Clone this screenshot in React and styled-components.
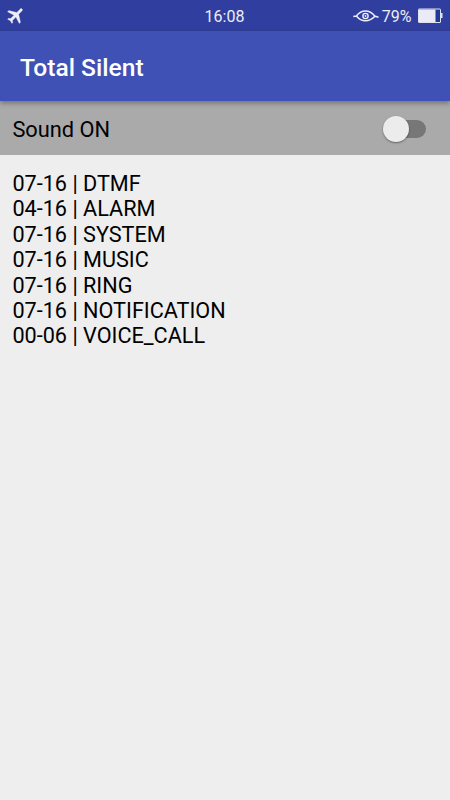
import styled, { createGlobalStyle } from "styled-components";

const GlobalStyle = createGlobalStyle`
  * {
    box-sizing: border-box;
  }
  body {
    margin: 0;
    background: #eeeeee;
    font-family: Roboto, "Liberation Sans", sans-serif;
  }
`;

const Screen = styled.div`
  width: 450px;
  height: 800px;
  overflow: hidden;
  background: #eeeeee;
`;

const StatusBar = styled.div`
  display: grid;
  grid-template-columns: 1fr auto 1fr;
  align-items: center;
  height: 31px;
  padding: 0 7px 0 5px;
  background: #303f9f;
  color: #eceef8;
`;

const Time = styled.span`
  padding: 2px 0 0 1px;
  font-size: 16px;
  line-height: 29px;
`;

const StatusRight = styled.div`
  display: flex;
  align-items: center;
  justify-content: flex-end;
`;

const Percent = styled.span`
  margin: 0 6.6px 0 3px;
  padding-top: 2px;
  font-size: 16px;
  line-height: 29px;
`;

const Icon = styled.svg`
  display: block;
`;

const AppBar = styled.header`
  position: relative;
  display: flex;
  align-items: center;
  height: 70px;
  padding: 3px 20px 0;
  background: #3f51b5;
  box-shadow: 0 2px 5px rgba(0, 0, 0, 0.35);
`;

const Title = styled.h1`
  margin: 0;
  color: #fff;
  font-size: 24.6px;
  font-weight: 500;
  line-height: 30px;
`;

const SoundRow = styled.div`
  display: flex;
  align-items: center;
  justify-content: space-between;
  height: 54px;
  padding: 2px 24px 0 12.4px;
  background: #aaaaaa;
`;

const SoundLabel = styled.span`
  padding-top: 1px;
  color: #000;
  font-size: 21.8px;
  line-height: 26px;
`;

const Track = styled.div`
  display: flex;
  align-items: center;
  justify-content: ${(props) => (props.$on ? "flex-end" : "flex-start")};
  width: 43px;
  height: 18px;
  border-radius: 9px;
  background: linear-gradient(to right, transparent 12px, #777777 12px);
`;

const Thumb = styled.div`
  width: 26px;
  height: 26px;
  border-radius: 50%;
  background: #ececec;
  box-shadow: 0 1px 2px rgba(0, 0, 0, 0.4);
`;

const List = styled.ul`
  margin: 0;
  padding: 16px 12.4px;
  list-style: none;
`;

const Line = styled.li`
  color: #000;
  font-size: 21.65px;
  line-height: 25.4px;
`;

const streams = [
  "07-16 | DTMF",
  "04-16 | ALARM",
  "07-16 | SYSTEM",
  "07-16 | MUSIC",
  "07-16 | RING",
  "07-16 | NOTIFICATION",
  "00-06 | VOICE_CALL",
];

function Plane() {
  return (
    <Icon width="21" height="21" viewBox="0 0 24 24" fill="currentColor">
      <path
        transform="translate(.8 0) rotate(45 12 12)"
        stroke="currentColor"
        strokeWidth=".3"
        d="M21 16v-2l-8-5V3.5c0-.83-.67-1.5-1.5-1.5S10 2.67 10 3.5V9l-8 5v2l8-2.5V19l-2 1.5V22l3.5-1 3.5 1v-1.5L13 19v-5.5l8 2.5z"
      />
    </Icon>
  );
}

function Eye() {
  return (
    <Icon width="26" height="14" viewBox="0 0 26 14" fill="none" stroke="currentColor">
      <path
        d="M.3 7.6L3.4 7C6 3.7 9 2.1 12.5 2.1S19 3.700 22 7.300c-3 3-6 4.500-9.500 4.500S6 10.200 3.400 7M21.500 7l4 1.200"
        strokeWidth="1.5"
      />
      <circle cx="12.5" cy="7" r="2.6" strokeWidth="1.4" />
      <circle cx="12.5" cy="7" r=".9" fill="currentColor" stroke="none" />
    </Icon>
  );
}

function Battery() {
  return (
    <Icon width="25" height="15" viewBox="0 0 25 15">
      <rect x=".5" y="1" width="22" height="13.5" rx=".5" fill="#1f3a93" stroke="#dfe1ef" />
      <rect x="1" y="1.5" width="16.5" height="12.5" fill="#eaebf6" />
      <rect x="23" y="5" width="1.5" height="5" fill="#dfe1ef" />
    </Icon>
  );
}

function App() {
  return (
    <Screen>
      <GlobalStyle />
      <StatusBar>
        <Plane />
        <Time>16:08</Time>
        <StatusRight>
          <Eye />
          <Percent>79%</Percent>
          <Battery />
        </StatusRight>
      </StatusBar>
      <AppBar>
        <Title>Total Silent</Title>
      </AppBar>
      <SoundRow>
        <SoundLabel>Sound ON</SoundLabel>
        <Track $on={false}>
          <Thumb />
        </Track>
      </SoundRow>
      <List>
        {streams.map((stream) => (
          <Line key={stream}>{stream}</Line>
        ))}
      </List>
    </Screen>
  );
}

export default App;
